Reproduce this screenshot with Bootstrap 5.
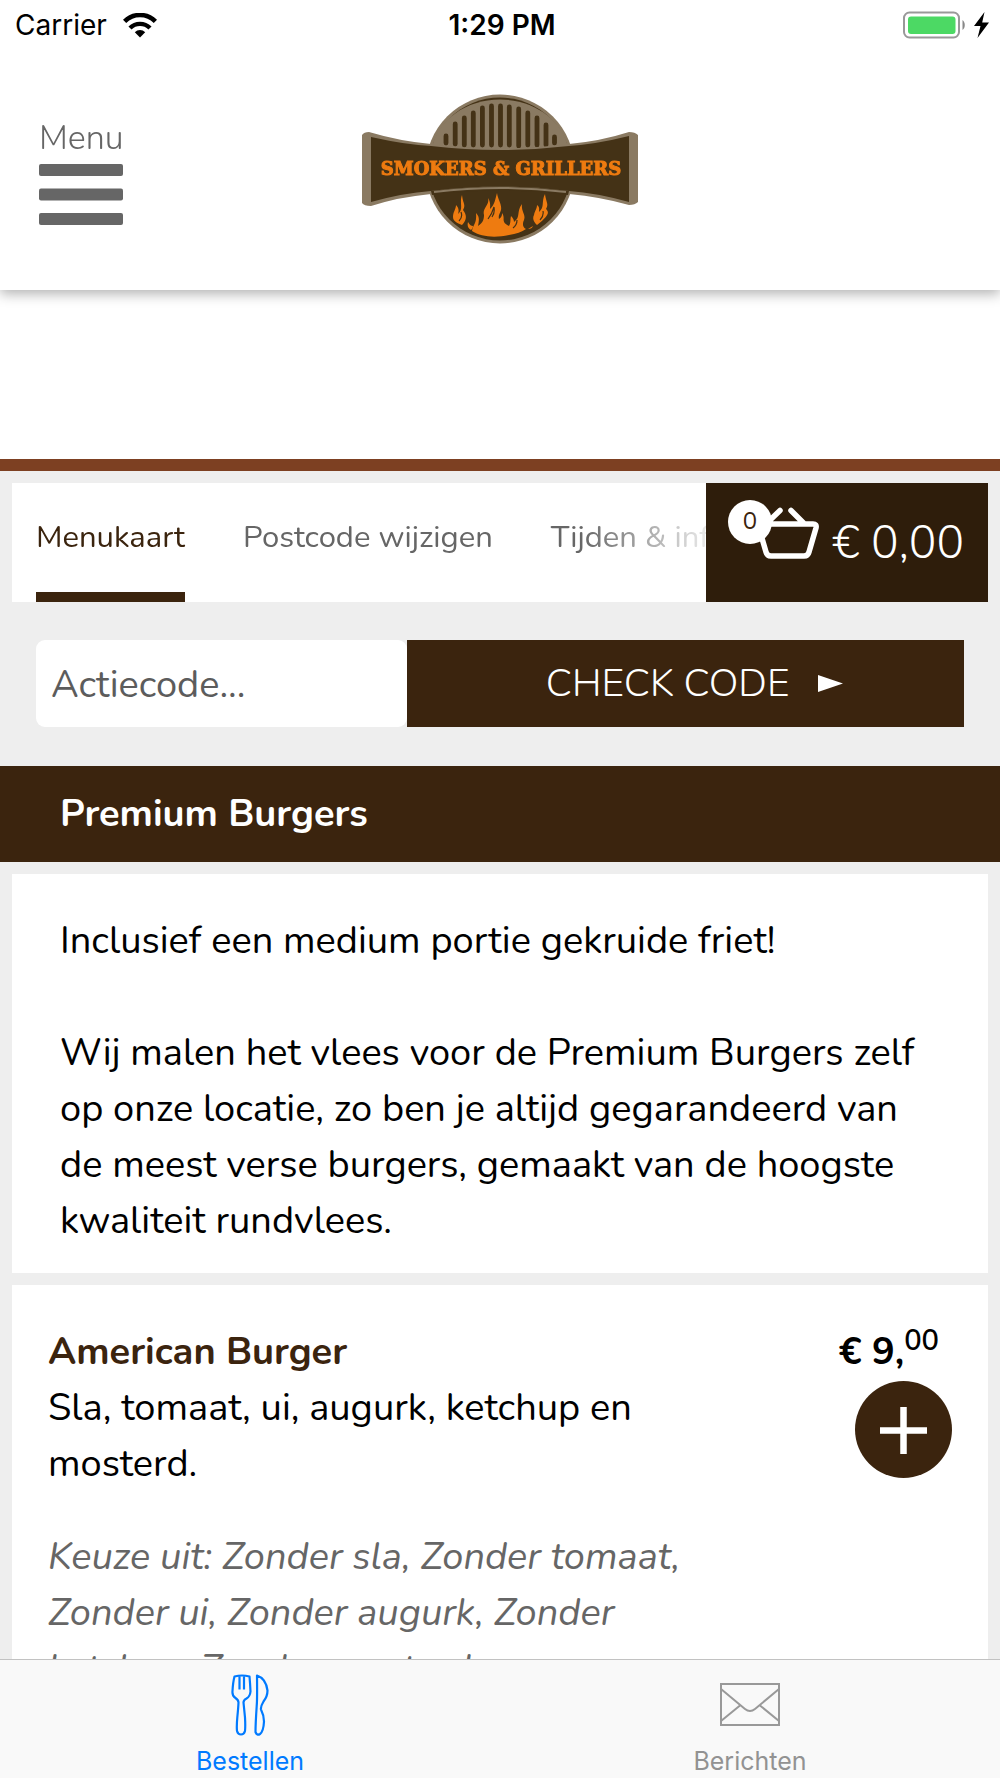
<!DOCTYPE html>
<html lang="nl">
<head>
<meta charset="utf-8">
<meta name="viewport" content="width=device-width, initial-scale=1">
<title>Smokers &amp; Grillers</title>
<link href="https://cdn.jsdelivr.net/npm/bootstrap@5.3.0/dist/css/bootstrap.min.css" rel="stylesheet">
<style>
:root{--brown:#3b240e;--grey:#666;--gap:12px}
body{font-family:Nunito,Lato,"Open Sans",sans-serif;font-size:38px;line-height:56px;color:#000;background:#fff}
.ui-font{font-family:Inter,"Liberation Sans",sans-serif}
.status-bar{height:50px;padding:0 11px 0 15px;font-size:28px;line-height:50px;z-index:3}
.status-bar > div{flex:1 1 0}
.top-bar{height:240px;padding:0 36px 6px;box-shadow:0 4px 12px rgba(0,0,0,.3);z-index:2}
.top-bar > *{flex:1 1 0}
.menu-toggle{border:0;background:none;color:var(--grey);font-size:34px;line-height:44px;font-weight:340;padding:0 3px;text-align:left}
.menu-toggle svg{display:block;margin-top:4px}
.page-scroll{scrollbar-width:none;background:#eee}
.page-scroll::-webkit-scrollbar{display:none}
.hero-space{height:169px;background:#fff}
.accent-line{height:12px;background:#7d4022}
.tab-row{margin:var(--gap) var(--gap) 0;height:119px;background:#fff}
.tab-links{padding-left:24px;gap:58px;font-size:31px;min-width:0;-webkit-mask-image:linear-gradient(to right,#000 82%,rgba(0,0,0,.15));mask-image:linear-gradient(to right,#000 82%,rgba(0,0,0,.15))}
.tab-links a{color:var(--grey);text-decoration:none;white-space:nowrap;line-height:109px;border-bottom:10px solid transparent}
.tab-links a.active{color:var(--brown);border-color:var(--brown)}
.cart-button{border:0;background:#2e1d0b;color:#fff;width:282px;padding:0 24px 0 22px;font-size:46px;font-weight:340}
.cart-icon{width:92px;height:60px;margin-bottom:20px}
.cart-count{left:0;top:-3px;width:44px;height:44px;background:#fff;color:var(--brown);font-size:24px;line-height:42px;font-weight:400}
.code-form{margin:38px 36px 39px}
.code-form .form-control{flex:0 0 40%;height:87px;border:0;border-radius:9px;font-size:38px;padding:2px 15px 0;color:#000}
.code-form .form-control::placeholder{color:#5c5c5c;opacity:1}
.code-form button{border:0;background:var(--brown);color:#fff;font-size:39px;font-weight:340;gap:29px;padding-left:24px}
.category-title{background:var(--brown);color:#fff;font-size:38px;line-height:56px;font-weight:700;padding:20px 60px;margin:0}
.panel{background:#fff;margin:var(--gap) var(--gap) 0}
.intro-text{padding:39px 48px 24px}
.product{padding:39px 36px 36px}
.product-name{font-size:38px;line-height:56px;font-weight:700;color:var(--brown);margin:0}
.options{color:var(--grey);font-style:italic;margin-top:37px}
.price{font-weight:700;padding-right:13px}
.price sup{font-size:29px;font-weight:600;top:-14px;line-height:0;vertical-align:baseline}
.add-button{width:97px;height:97px;border:0;background:var(--brown);margin-top:1px}
.tab-bar{height:119px;background:#f9f9f9;border-top:1px solid #c2c2c2;font-size:25px;line-height:30px}
.tab-bar a{flex:1 1 0;color:#929292;text-decoration:none;padding-top:14px}
.tab-bar a.active{color:#007aff}
.tab-bar svg{display:block;margin-bottom:10px}
</style>
</head>
<body class="vh-100 d-flex flex-column overflow-hidden">
<div class="status-bar ui-font d-flex align-items-center flex-shrink-0 position-relative bg-white">
  <div class="d-flex align-items-center gap-3"><span>Carrier</span>
    <svg width="34" height="25" viewBox="0 0 34 25" aria-hidden="true"><path d="M17 24.500l5.200-5.300a7.400 7.400 0 0 0-10.400 0z"/><path d="M7 15a14.200 14.200 0 0 1 20 0" fill="none" stroke="#000" stroke-width="4.400"/><path d="M1.600 8.300a22 22 0 0 1 30.800 0" fill="none" stroke="#000" stroke-width="4.600"/></svg>
  </div>
  <div class="text-center fw-semibold">1:29 PM</div>
  <div class="d-flex justify-content-end align-items-center gap-2">
    <svg width="64" height="28" viewBox="0 0 64 28" aria-hidden="true"><rect x="2" y="1.500" width="55" height="25" rx="5.500" fill="#fff" stroke="#999" stroke-width="2"/><rect x="6" y="5.500" width="47.500" height="17.500" rx="3" fill="#4cd964"/><path d="M60.500 9v10c3-2 3-8 0-10z" fill="#888"/></svg>
    <svg width="15" height="26" viewBox="0 0 15 26" aria-hidden="true"><path d="M10.500 0L0 14h6.500L3.500 26 15 10.500H8.200z"/></svg>
  </div>
</div>
<header class="top-bar d-flex align-items-center position-relative flex-shrink-0 bg-white">
  <div>
    <button class="menu-toggle" type="button">Menu
      <svg width="84" height="61" viewBox="0 0 84 61" fill="#666" aria-hidden="true"><rect width="84" height="12" rx="2"/><rect y="24.500" width="84" height="12" rx="2"/><rect y="49" width="84" height="12" rx="2"/></svg>
    </button>
  </div>
  <a class="d-flex justify-content-center" href="#" aria-label="Smokers &amp; Grillers">
    <svg width="300" height="175" viewBox="0 0 300 175">
      <circle cx="150" cy="89" r="74.500" fill="#8a7a62"/>
      <circle cx="150" cy="89" r="71.500" fill="#443216"/>
      <path d="M82 67C88 40 116 19.500 150 19.500s62 20.500 68 47.500q-68 6-136 0z" fill="#8a7a62"/>
      <path d="M96 56v7M105.200 44v20M114.300 38v27M123.300 33v32M132.400 28v37M141.500 26v39M150.500 26v39M159.300 27v38M168.700 29v37M177.800 33v32M187 38v27M196 45v20M204.500 57v6" stroke="#443216" stroke-width="4.800" stroke-linecap="round"/>
      <path d="M12 55q2-3 7-3 30 9 62 12 69 9 138 0 32-3 60-12 6 0 9 3v67q-3 3-9 3-28-8-60-11-69-10-138 0-32 3-60 12-7 0-9-3z" fill="#8a7a62"/>
      <path d="M21 57q36 8 60 9 69 8 138 0 28-2 60-10v66q-32-9-60-11-69-9-138 0-28 2-60 11z" fill="#443216"/>
      <path d="M81 111q69-9 138 0l-1 4q-68-9-136 0z" fill="#443216"/>
      <path d="M84 112q66-8 132 0" fill="none" stroke="#8a7a62" stroke-width="2"/>
      <text x="151" y="95" text-anchor="middle" font-family="DejaVu Serif,serif" font-weight="700" font-size="18" fill="#ee7b10" stroke="#ee7b10" stroke-width="1">SMOKERS &amp; GRILLERS</text>
      <g fill="#ee7b10">
        <path d="M112 145c-5-2-9-4-9-8 0-5 3-8 3-12 3 3 3 6 2 9 6-5 1-11 4-19 1 9 4 9 1 15 4 5 4 10-1 15zM187 145c-3-3-5-6-3-10 1-5 3-6 3-10 3 2 2 5 2 7 6-5 2-10 6-18 1 8 4 10 1 15 3 3 4 6-9 16zM118 142c2 3 3 4 5 4 0 2-1 3-2 4-3-2-4-4-3-8z"/>
        <path d="M122 151c1-7 5-7 4-18 4 4 3 8 2 13 5-3 6-7 6-11-2-7 6-10 4-17 3 5 2 8 2 11 5-5 5-9 7-16 1 7 5 11 4 17-1 4-3 5-2 9 3-2 3-4 3-6 4 5-2 9 7 13 2-3 1-6 2-10 2 2 3 4 3 6 7-5 2-10 8-18-1 8 4 10 2 16-2 4-1 8 2 9-4 3-10 5-17 6-14 3-28 2-37-4z"/>
        <path d="M178 149l5-3q-1 3-5 3z"/>
      </g>
      <path d="M138 139q4-5 6-12 1 6-2 10M163 148q4-3 4-8M109 141q4-4 2-9M190 140q4-4 3-9" fill="none" stroke="#443216" stroke-width="1.200"/>
    </svg>
  </a>
  <div></div>
</header>
<main class="page-scroll flex-grow-1 overflow-auto">
  <div class="hero-space"></div>
  <div class="accent-line"></div>
  <div class="tab-row d-flex">
    <nav class="tab-links d-flex flex-grow-1 overflow-hidden">
      <a class="active" href="#">Menukaart</a>
      <a href="#">Postcode wijzigen</a>
      <a href="#">Tijden &amp; info</a>
    </nav>
    <button class="cart-button d-flex align-items-center justify-content-between flex-shrink-0" type="button">
      <span class="cart-icon position-relative">
        <svg class="d-block" width="92" height="60" viewBox="0 0 92 60" fill="none" stroke="#fff" stroke-width="5.500" stroke-linecap="round" stroke-linejoin="round" aria-hidden="true"><path d="M32 21h53q4 0 3 4l-7 24q-1 4-5 4H43q-4 0-5-4l-7-24q-1-4 1-4zM52 7.500L39 20M63 7.500l13 13"/></svg>
        <span class="cart-count position-absolute rounded-circle text-center">0</span>
      </span>
      <span>€ 0,00</span>
    </button>
  </div>
  <form class="code-form d-flex">
    <input class="form-control" type="text" placeholder="Actiecode..." aria-label="Actiecode">
    <button class="flex-grow-1 d-flex align-items-center justify-content-center" type="button">CHECK CODE
      <svg width="25" height="17" viewBox="0 0 25 17" fill="#fff" aria-hidden="true"><path d="M0 0l25 8.500L0 17z"/></svg>
    </button>
  </form>
  <h2 class="category-title">Premium Burgers</h2>
  <section class="panel intro-text">
    <p class="m-0">Inclusief een medium portie gekruide friet!<br><br>Wij malen het vlees voor de Premium Burgers zelf op onze locatie, zo ben je altijd gegarandeerd van de meest verse burgers, gemaakt van de hoogste kwaliteit rundvlees.</p>
  </section>
  <article class="panel product">
    <div class="row g-0">
      <div class="col-9">
        <h3 class="product-name">American Burger</h3>
        <p class="m-0">Sla, tomaat, ui, augurk, ketchup en mosterd.</p>
        <p class="options mb-0">Keuze uit: Zonder sla, Zonder tomaat, Zonder ui, Zonder augurk, Zonder ketchup, Zonder mosterd.</p>
      </div>
      <div class="col-3 d-flex flex-column align-items-end">
        <div class="price">€ 9,<sup>00</sup></div>
        <button class="add-button rounded-circle d-flex align-items-center justify-content-center p-0" type="button" aria-label="American Burger toevoegen">
          <svg width="47" height="49" viewBox="0 0 47 49" stroke="#fff" stroke-width="6.500" aria-hidden="true"><path d="M0 25.500h47M23.500 2v47"/></svg>
        </button>
      </div>
    </div>
  </article>
</main>
<nav class="tab-bar ui-font d-flex flex-shrink-0">
  <a class="active d-flex flex-column align-items-center" href="#">
    <svg width="40" height="62" viewBox="0 0 40 62" fill="none" stroke="#007aff" stroke-width="2.200" stroke-linejoin="round" aria-hidden="true"><path d="M4.500 2.500q7.500-2 15 0 .7 8 1 15-.5 5-4 7-3 1.500-3 4 .5 5 1.500 15 .5 9 0 13.500-1 3.500-4 3.500t-4-3.500q-.5-5 .3-13.500 1-10 1.200-15 0-2.500-3-4.500-3.500-2-3-7 .5-9 2-14.500zM9.500 2v13.500M14 2v13.500M27 1.500q9 3 10.500 15 0 6-4 11-3 5-2.500 8 3 6 3 12-.5 10-4 12.500-3 2-4.500-2 0-8 1.200-26 .6-6 .3-30.500z"/></svg>
    Bestellen</a>
  <a class="d-flex flex-column align-items-center" href="#">
    <svg width="60" height="62" viewBox="0 0 60 62" fill="none" stroke="#999" stroke-width="2" aria-hidden="true"><rect x="1" y="10" width="58" height="41"/><path d="M1 15l24 20q5 4 10 0l24-20M1 47l19-15.500M59 47L40 31.500"/></svg>
    Berichten</a>
</nav>
<script src="https://cdn.jsdelivr.net/npm/bootstrap@5.3.0/dist/js/bootstrap.bundle.min.js"></script>
</body>
</html>
